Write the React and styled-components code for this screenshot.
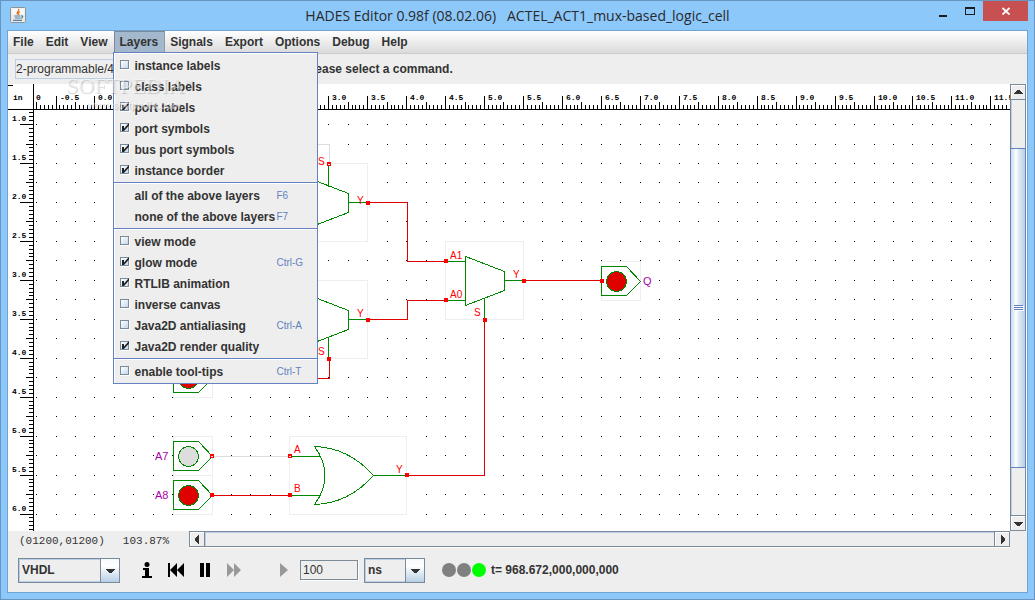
import React from 'react';
import styled, { createGlobalStyle } from 'styled-components';

const GlobalStyle = createGlobalStyle`
  * { box-sizing: border-box; }
  body { margin: 0; }
  button, input, select { font: inherit; color: inherit; margin: 0; padding: 0; border: 0; border-radius: 0; background: none; outline: none; }
`;

const steel = '#7a8a99';
const paleBlue = '#b8cfe5';
const menuBlue = '#6382bf';
const glossy = 'linear-gradient(#f6fafd, #ffffff 30%, #b8cfe5)';

const Window = styled.div`
  display: flex;
  flex-direction: column;
  height: 100vh;
  padding: 0 6px 6px;
  border: 1px solid #6a95c0;
  background: #8dc8fb;
  color: #333;
  font: bold 12px/14px "Liberation Sans", Arial, sans-serif;
`;

const TitleBar = styled.header`
  display: grid;
  grid-template-columns: 101px 1fr 101px;
  height: 29px;
  flex: none;
`;

const AppIcon = styled.svg`
  margin: 6px 0 0 3px;
`;

const Title = styled.h1`
  margin: 0;
  text-align: center;
  white-space: pre;
  color: #2a2a2a;
  font: 14px/30px "Open Sans", "Noto Sans", sans-serif;
`;

const WindowButtons = styled.div`
  display: flex;
  justify-content: flex-end;
  align-items: flex-start;
`;

const WindowButton = styled.button`
  display: grid;
  place-items: center;
  width: ${(p) => (p.$close ? '45px' : '27px')};
  height: 20px;
  background: ${(p) => (p.$close ? '#c75050' : 'transparent')};
`;

const Content = styled.main`
  display: flex;
  flex-direction: column;
  flex: 1;
  min-height: 0;
  border: 1px solid #6fa3d4;
  background: #eee;
`;

const MenuBar = styled.nav`
  display: flex;
  height: 23px;
  flex: none;
  border-bottom: 1px solid #ccc;
  background: linear-gradient(#fff, #dadada);
`;

const MenuHolder = styled.div`
  position: relative;
  display: flex;
`;

const MenuButton = styled.button`
  padding: 0 7px 0 5px;
  background: ${(p) => (p.$open ? '#a3b8cc' : 'transparent')};
  box-shadow: ${(p) => (p.$open ? 'inset 1px 1px #7a8a99, inset -1px 0 #8d9aa8' : 'none')};
`;

const Menu = styled.div`
  position: absolute;
  z-index: 2;
  top: calc(100% - 1px);
  left: -1px;
  width: 205px;
  padding: 2px 0 1px;
  border: 1px solid ${menuBlue};
  background: #eee;
  box-shadow: inset 1px 1px #fff;
`;

const menuRow = `
  display: grid;
  grid-template-columns: 14px 142px 1fr;
  align-items: center;
  width: 100%;
  height: 21px;
  padding: 0 0 0 6px;
  text-align: left;
  white-space: nowrap;
`;

const CheckRow = styled.label`${menuRow}`;
const ActionRow = styled.button`${menuRow}`;

const Shortcut = styled.span`
  color: ${menuBlue};
  font-weight: normal;
  font-size: 10px;
`;

const Separator = styled.hr`
  height: 2px;
  margin: 1px 0;
  border: 0;
  border-top: 1px solid ${menuBlue};
  background: #fff;
`;

const CheckCell = styled.span`
  display: grid;
  width: 10px;
  height: 10px;
  margin-bottom: 2px;
  > * { grid-area: 1 / 1; }
  svg { pointer-events: none; }
`;

const CheckBox = styled.input`
  appearance: none;
  width: 9px;
  height: 9px;
  border: 1px solid ${steel};
  background: linear-gradient(135deg, #fff, #c5d8ea);
  box-shadow: 1px 1px #fff;
`;

const CommandBar = styled.div`
  display: flex;
  align-items: center;
  gap: 8px;
  height: 30px;
  flex: none;
  padding: 0 7px;
`;

const PathField = styled.input`
  width: 281px;
  height: 20px;
  border: 1px solid ${paleBlue};
  font-weight: normal;
`;

const Workspace = styled.section`
  display: flex;
  flex: 1;
  min-height: 0;
`;

const Canvas = styled.svg`
  flex: 1;
  min-width: 0;
  height: 100%;
  background: #fff;
  font-family: "Liberation Sans", Arial, sans-serif;
  font-weight: normal;
`;

const VScroll = styled.div`
  display: flex;
  flex-direction: column;
  width: 17px;
  border-right: 1px solid #fff;
`;

const HScroll = styled.div`
  display: flex;
  flex: 1;
  height: 17px;
  margin-right: 17px;
  border-bottom: 1px solid #fff;
`;

const ScrollButton = styled.button`
  display: grid;
  place-items: center;
  flex: none;
  width: 16px;
  height: 16px;
  border: 1px solid ${steel};
  background: #eee;
  box-shadow: inset 1px 1px #fff;
`;

const VTrack = styled.div`
  flex: ${(p) => p.$grow};
  border: 0 solid ${steel};
  border-width: 0 1px;
  box-shadow: inset 1px 0 ${paleBlue};
`;

const VThumb = styled.div`
  display: flex;
  flex-direction: column;
  justify-content: center;
  align-items: center;
  gap: 1px;
  flex: 320;
  border: 1px solid ${menuBlue};
  background: linear-gradient(90deg, #c8daec, #fff 35%, #dbe7f2 60%, #b8cfe5);
`;

const Grip = styled.i`
  width: 9px;
  height: 1px;
  background: ${menuBlue};
  box-shadow: 1px 1px #fff;
`;

const HTrack = styled.div`
  flex: 1;
  border: 0 solid ${steel};
  border-width: 1px 0;
  box-shadow: inset 1px 1px ${paleBlue};
`;

const StatusBar = styled.div`
  display: flex;
  flex: none;
`;

const StatusText = styled.div`
  display: flex;
  gap: 18px;
  width: 181px;
  padding: 3px 0 0 11px;
  white-space: nowrap;
  font: 11px/14px "Liberation Mono", "Courier New", monospace;
`;

const ControlBar = styled.footer`
  display: flex;
  align-items: center;
  height: 44px;
  flex: none;
  padding: 0 10px;
`;

const Combo = styled.span`
  display: grid;
  grid-template-columns: 1fr 19px;
  width: ${(p) => p.$width};
  height: 25px;
  border: 1px solid ${steel};
  > * { grid-row: 1; }
`;

const ComboSelect = styled.select`
  appearance: none;
  grid-column: 1 / 3;
  padding: 0 2px;
  border: 1px solid ${paleBlue};
`;

const ComboArrow = styled.span`
  grid-column: 2;
  display: grid;
  place-items: center;
  border-left: 1px solid ${steel};
  background: ${glossy};
  pointer-events: none;
`;

const Transport = styled.div`
  display: flex;
  align-items: center;
  padding: 0 5px 0 12px;
`;

const IconButton = styled.button`
  display: grid;
  place-items: center;
  width: ${(p) => (p.$wide ? '47px' : '29px')};
  height: 20px;
  ${(p) => p.$wide && 'padding-left: 24px;'}
`;

const StepField = styled.input`
  width: 58px;
  height: 20px;
  margin-right: 6px;
  padding: 0 2px;
  border: 1px solid ${steel};
  box-shadow: 1px 1px #fff;
  font-weight: normal;
`;

const Lamps = styled.div`
  display: flex;
  gap: 1px;
  margin: 0 5px 0 17px;
`;

const Lamp = styled.span`
  width: 14px;
  height: 14px;
  border-radius: 50%;
  background: ${(p) => (p.$on ? '#00ff00' : '#808080')};
`;

const Watermark = styled.div`
  position: absolute;
  z-index: 3;
  top: 73px;
  left: 66px;
  color: rgba(255, 255, 255, 0.5);
  text-shadow: 1px 1px 1px rgba(0, 0, 0, 0.18);
  font: 22px/25px "Liberation Serif", "Times New Roman", serif;
  pointer-events: none;
`;

const WatermarkMark = styled.sup`
  font-size: 8px;
  line-height: 8px;
`;

const WatermarkSite = styled.div`
  padding-left: 21px;
  font: bold 10px/16px "Liberation Sans", Arial, sans-serif;
`;

const green = '#008800';
const wireRed = '#e00000';

const range = (from, to, step) =>
  Array.from({ length: Math.round((to - from) / step) + 1 }, (_, i) => from + i * step);

const INCH = 77.9025;
const toX = (inch) => Math.floor(94.98 + inch * INCH);
const toY = (inch) => Math.floor(46.65 + inch * INCH);

const tickLength = (twentieths) => {
  if (twentieths % 10 === 0) return 13;
  return twentieths % 5 === 0 ? 7 : 4;
};

function Rulers() {
  return (
    <g shapeRendering="crispEdges">
      <path d="M8 109h2000v1H8zM33 84h1v900h-1zM8 85h5v1H8z" />
      {range(-15, 460, 1).map((t) => (
        <rect key={t} x={toX(t / 20)} y={109 - tickLength(t)} width="1" height={tickLength(t)} />
      ))}
      {range(17, 180, 1).map((t) => (
        <rect key={t} x={33 - tickLength(t)} y={toY(t / 20)} width={tickLength(t)} height="1" />
      ))}
      <g fontSize="8" fontWeight="bold" fontFamily='"Liberation Mono", "Courier New", monospace'>
        <text x="13" y="100">in</text>
        <text x="36" y="100">0</text>
        {range(-0.5, 11.5, 0.5).map((v) => (
          <text key={v} x={toX(v) + 4} y="100">{v.toFixed(1)}</text>
        ))}
        {range(1, 6, 0.5).map((v) => (
          <text key={v} x="12" y={toY(v) - 3}>{v.toFixed(1)}</text>
        ))}
      </g>
    </g>
  );
}

function GridDots() {
  const d = range(1, 9, 0.25)
    .map((y) => range(-0.75, 23, 0.25).map((x) => `M${toX(x)} ${toY(y)}h1v1h-1z`).join(''))
    .join('');
  return <path d={d} shapeRendering="crispEdges" />;
}

const Frame = ({ x, y, w, h }) => (
  <rect x={x} y={y} width={w} height={h} fill="#fff" stroke="#eeeeee" />
);

const Port = ({ x, y, hollow }) => (
  <g stroke="none">
    <rect x={x - 1} y={y - 2} width="4" height="4" fill="#ff0000" />
    {hollow && <rect x={x} y={y} width="2" height="1" fill="#ddd" />}
  </g>
);

function Mux({ x, y, selectTop }) {
  return (
    <g>
      <Frame x={x} y={y} w={78} h={78} />
      <path
        fill="none"
        stroke={green}
        d={`M${x + 20} ${y + 15}v49l39-15v-19zM${x + 59} ${y + 39}h19M${x} ${y + 20}h20M${x} ${y + 59}h20M${x + 39} ${
          selectTop ? `${y}v23` : `${y + 57}v21`
        }`}
      />
    </g>
  );
}

function Pad({ x, y, on }) {
  return (
    <g>
      <Frame x={x} y={y} w={39} h={39} />
      <path d={`M${x} ${y + 5}h25l14 15-14 14h-25z`} fill="none" stroke={green} />
      <circle cx={x + 15} cy={y + 20} r="10" fill={on ? wireRed : '#dddddd'} stroke={green} />
    </g>
  );
}

function Schematic() {
  return (
    <>
      <g transform="translate(.5 .5)" shapeRendering="crispEdges">
        <Mux x={289} y={163} selectTop />
        <Mux x={289} y={280} />
        <Mux x={445} y={241} />
        <Frame x={289} y={436} w={117} h={78} />
        <path
          fill="none"
          stroke={green}
          d="M314 446Q348 447 373 475Q348 503 314 504Q335 475 314 446M289 456h31M289 495h31M373 475h33"
        />
        <Pad x={173} y={358} on />
        <Pad x={173} y={436} />
        <Pad x={173} y={475} on />
        <Pad x={601} y={261} on />
        <g fill="none" stroke={wireRed}>
          <path d="M367 202h40v59h38M367 319h40v-19h38M523 280h78M406 475h78V319M212 495h77M329 358v20H212" />
          <path stroke="#dddddd" d="M212 456h77M329 163v-19H212" />
        </g>
      </g>
      <g shapeRendering="crispEdges">
        <Port x={367} y={203} />
        <Port x={367} y={320} />
        <Port x={328} y={164} hollow />
        <Port x={328} y={359} />
        <Port x={445} y={261} />
        <Port x={445} y={300} />
        <Port x={523} y={281} />
        <Port x={484} y={320} />
        <Port x={601} y={281} />
        <Port x={211} y={456} hollow />
        <Port x={211} y={495} />
        <Port x={289} y={456} hollow />
        <Port x={289} y={495} />
        <Port x={406} y={475} />
      </g>
      <g fontSize="10" fill="#ff0000">
        <text x="318" y="165">S</text>
        <text x="357" y="204">Y</text>
        <text x="357" y="317">Y</text>
        <text x="318" y="355">S</text>
        <text x="450" y="259">A1</text>
        <text x="450" y="298">A0</text>
        <text x="513" y="278">Y</text>
        <text x="474" y="316">S</text>
        <text x="294" y="453">A</text>
        <text x="294" y="492">B</text>
        <text x="396" y="473">Y</text>
      </g>
      <g fontSize="11" fill="#aa00aa">
        <text x="155" y="460">A7</text>
        <text x="155" y="499">A8</text>
        <text x="643" y="285">Q</text>
      </g>
    </>
  );
}

const arrows = {
  up: 'M0 6h9v-1h-1v-1h-1v-1h-1v-1h-3v1h-1v1h-1v1h-1z',
  down: 'M0 3h9v1h-1v1h-1v1h-1v1h-3v-1h-1v-1h-1v-1h-1z',
  left: 'M6 0v9h-1v-1h-1v-1h-1v-1h-1v-3h1v-1h1v-1h1v-1z',
  right: 'M3 0v9h1v-1h1v-1h1v-1h1v-3h-1v-1h-1v-1h-1v-1z',
};

const Arrow = ({ to }) => (
  <svg width="9" height="9" viewBox="0 0 9 9" fill="#333" shapeRendering="crispEdges">
    <path d={arrows[to]} />
  </svg>
);

const checkItems = [
  [
    ['instance labels', false],
    ['class labels', false],
    ['port labels', true],
    ['port symbols', true],
    ['bus port symbols', true],
    ['instance border', true],
  ],
  [
    ['view mode', false],
    ['glow mode', true, 'Ctrl-G'],
    ['RTLIB animation', true],
    ['inverse canvas', false],
    ['Java2D antialiasing', false, 'Ctrl-A'],
    ['Java2D render quality', true],
  ],
  [['enable tool-tips', false, 'Ctrl-T']],
];

function CheckItem({ label, initial, keys }) {
  const [checked, setChecked] = React.useState(initial);
  return (
    <CheckRow>
      <CheckCell>
        <CheckBox type="checkbox" checked={checked} onChange={() => setChecked(!checked)} />
        {checked && (
          <svg width="10" height="10" viewBox="0 0 10 10" fill="#222">
            <path d="M2 3h2v2.500L9 0v2.500L4 8H2z" />
          </svg>
        )}
      </CheckCell>
      <span>{label}</span>
      {keys && <Shortcut>{keys}</Shortcut>}
    </CheckRow>
  );
}

const checkGroup = (items) =>
  items.map(([label, initial, keys]) => <CheckItem key={label} label={label} initial={initial} keys={keys} />);

function LayersMenu() {
  return (
    <Menu>
      {checkGroup(checkItems[0])}
      <Separator />
      <ActionRow><i /><span>all of the above layers</span><Shortcut>F6</Shortcut></ActionRow>
      <ActionRow><i /><span>none of the above layers</span><Shortcut>F7</Shortcut></ActionRow>
      <Separator />
      {checkGroup(checkItems[1])}
      <Separator />
      {checkGroup(checkItems[2])}
    </Menu>
  );
}

function JavaIcon() {
  return (
    <AppIcon width="16" height="16" viewBox="0 0 16 16" fill="none">
      <rect x=".5" y=".5" width="15" height="15" rx="1" fill="#e9e9e7" stroke="#8d9499" />
      <path d="M1.500 1.500h13v6h-13z" fill="#f8f8f6" />
      <path d="M8.500 2c1.500 2-3 3-1 5.500M10 4.500C8 5.500 8 6.500 9 8" stroke="#e8731c" strokeWidth="1.300" />
      <path d="M4.500 9h6M5 11h5M3 13.300h9M11 9c2.500-.5 2 2-.5 2.300" stroke="#5382a1" strokeWidth="1.200" />
    </AppIcon>
  );
}

const menusBefore = ['File', 'Edit', 'View'];
const menusAfter = ['Signals', 'Export', 'Options', 'Debug', 'Help'];

export default function App() {
  return (
    <Window>
      <GlobalStyle />
      <TitleBar>
        <JavaIcon />
        <Title>{'HADES Editor 0.98f (08.02.06)   ACTEL_ACT1_mux-based_logic_cell'}</Title>
        <WindowButtons>
          <WindowButton aria-label="Minimize">
            <svg width="10" height="12"><path d="M1 10h8v2H1z" fill="#1c1c1c" /></svg>
          </WindowButton>
          <WindowButton aria-label="Maximize">
            <svg width="10" height="8" shapeRendering="crispEdges">
              <path d="M0 0h10v8H0zM1 2v5h8V2z" fillRule="evenodd" fill="#1c1c1c" />
            </svg>
          </WindowButton>
          <WindowButton $close aria-label="Close">
            <svg width="8" height="8"><path d="M0.500 1l7 6.500M7.500 1l-7 6.500" stroke="#fff" strokeWidth="1.800" /></svg>
          </WindowButton>
        </WindowButtons>
      </TitleBar>

      <Content>
        <MenuBar>
          {menusBefore.map((m) => <MenuButton key={m}>{m}</MenuButton>)}
          <MenuHolder>
            <MenuButton $open>Layers</MenuButton>
            <LayersMenu />
          </MenuHolder>
          {menusAfter.map((m) => <MenuButton key={m}>{m}</MenuButton>)}
        </MenuBar>

        <CommandBar>
          <PathField aria-label="Design path" defaultValue="2-programmable/4" />
          <span>Please select a command.</span>
        </CommandBar>

        <Workspace>
          <Canvas>
            <g transform="translate(-8 -84)">
              <GridDots />
              <Schematic />
              <Rulers />
            </g>
          </Canvas>
          <VScroll>
            <ScrollButton aria-label="Scroll up"><Arrow to="up" /></ScrollButton>
            <VTrack $grow={48} />
            <VThumb><Grip /><Grip /><Grip /></VThumb>
            <VTrack $grow={47} />
            <ScrollButton aria-label="Scroll down"><Arrow to="down" /></ScrollButton>
          </VScroll>
        </Workspace>

        <StatusBar>
          <StatusText><span>(01200,01200)</span><span>103.87%</span></StatusText>
          <HScroll>
            <ScrollButton aria-label="Scroll left"><Arrow to="left" /></ScrollButton>
            <HTrack />
            <ScrollButton aria-label="Scroll right"><Arrow to="right" /></ScrollButton>
          </HScroll>
        </StatusBar>

        <ControlBar>
          <Combo $width="102px">
            <ComboSelect aria-label="Language"><option>VHDL</option></ComboSelect>
            <ComboArrow><Arrow to="down" /></ComboArrow>
          </Combo>
          <Transport>
            <IconButton aria-label="Info">
              <svg width="10" height="17"><circle cx="5" cy="2.500" r="2.500" /><path d="M1 6h6v8h3v2H0v-2h3V8H1z" /></svg>
            </IconButton>
            <IconButton aria-label="Rewind">
              <svg width="16" height="14"><path d="M0 0h2v14H0zM9 0v14L2 7zM16 0v14L9 7z" /></svg>
            </IconButton>
            <IconButton aria-label="Pause">
              <svg width="10" height="14"><path d="M0 0h4v14H0zM6 0h4v14H6z" /></svg>
            </IconButton>
            <IconButton aria-label="Fast forward">
              <svg width="14" height="14" fill="#999"><path d="M0 0v14l7-7zM7 0v14l7-7z" /></svg>
            </IconButton>
            <IconButton $wide aria-label="Step">
              <svg width="8" height="14" fill="#999"><path d="M0 0v14l8-7z" /></svg>
            </IconButton>
          </Transport>
          <StepField aria-label="Step size" defaultValue="100" />
          <Combo $width="61px">
            <ComboSelect aria-label="Time unit"><option>ns</option></ComboSelect>
            <ComboArrow><Arrow to="down" /></ComboArrow>
          </Combo>
          <Lamps><Lamp /><Lamp /><Lamp $on /></Lamps>
          <output>t= 968.672,000,000,000</output>
        </ControlBar>
      </Content>

      <Watermark aria-hidden="true">
        SOFTPEDIA<WatermarkMark>™</WatermarkMark>
        <WatermarkSite>www.softpedia.com</WatermarkSite>
      </Watermark>
    </Window>
  );
}
